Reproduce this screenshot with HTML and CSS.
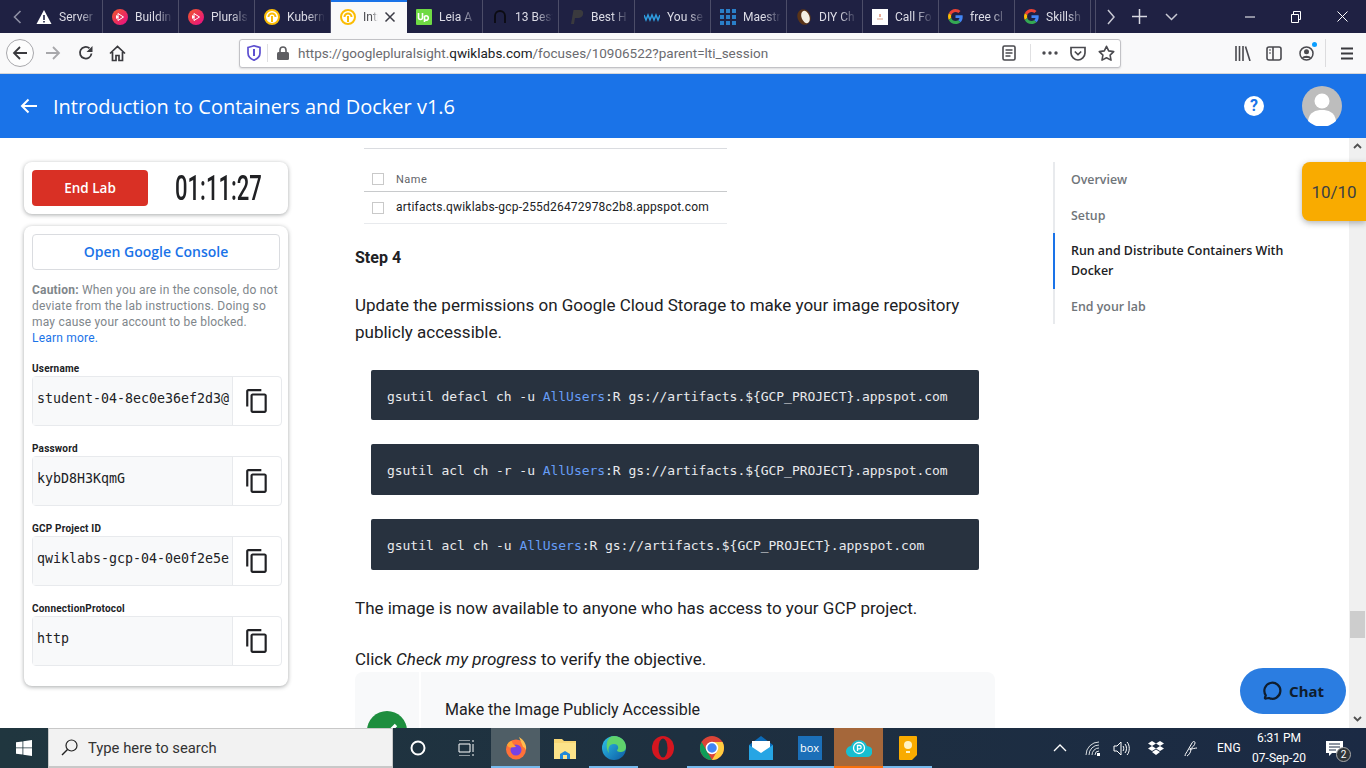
FILE: index.html
```html
<!DOCTYPE html>
<html lang="en">
<head>
    <meta charset="UTF-8">
    <title>Introduction to Containers and Docker v1.6</title>
    <link rel="stylesheet" href="styles.css">
</head>
<body>
    <svg class="defs" width="0" height="0">
        <symbol id="copy" viewBox="0 0 24 24"><path d="M16 1H4c-1.1 0-2 .9-2 2v14h2V3h12V1zm3 4H8c-1.1 0-2 .9-2 2v14c0 1.1.9 2 2 2h11c1.1 0 2-.9 2-2V7c0-1.1-.9-2-2-2zm0 16H8V7h11v14z" fill="#202124"/></symbol>
        <symbol id="pluralsight" viewBox="0 0 16 16"><defs><linearGradient id="psg" x1="0" y1="0" x2="1" y2="1"><stop offset="0" stop-color="#f05a28"/><stop offset="1" stop-color="#e80a89"/></linearGradient></defs><circle cx="8" cy="8" r="8" fill="url(#psg)"/><path d="M6 4.500v7L11.500 8z" fill="none" stroke="#fff"/><path d="M4 6v4l3-2z" fill="#fff"/></symbol>
        <symbol id="qwik" viewBox="0 0 16 16"><circle cx="8" cy="8" r="7" fill="#fff" stroke="#fbbc04" stroke-width="2"/><path d="M4.500 8a3.500 3.500 0 0 1 7 0" fill="none" stroke="#fbbc04" stroke-width="2"/><path d="M8 7v6" stroke="#fbbc04" stroke-width="2"/></symbol>
        <symbol id="google" viewBox="0 0 48 48"><path fill="#ea4335" d="M24 9.500c3.500 0 6.700 1.200 9.200 3.600l6.900-6.900C35.900 2.400 30.500 0 24 0 14.600 0 6.500 5.400 2.600 13.200l8 6.200C12.500 13.700 17.800 9.500 24 9.500z"/><path fill="#4285f4" d="M47 24.500c0-1.600-.1-3.100-.4-4.500H24v9h12.900c-.6 3-2.200 5.500-4.700 7.200l7.700 6c4.500-4.200 7.100-10.300 7.100-17.700z"/><path fill="#fbbc05" d="M10.600 28.600A14.500 14.500 0 0 1 9.800 24c0-1.600.3-3.200.8-4.600l-8-6.200A24 24 0 0 0 0 24c0 3.900.9 7.500 2.600 10.800l8-6.200z"/><path fill="#34a853" d="M24 48c6.500 0 11.900-2.100 15.900-5.800l-7.700-6c-2.200 1.500-4.900 2.300-8.200 2.300-6.200 0-11.500-4.200-13.400-9.900l-8 6.200C6.500 42.600 14.600 48 24 48z"/></symbol>
    </svg>

    <!-- browser tabs -->
    <div class="tabbar">
        <svg class="tab-scroll" width="12" height="16" viewBox="0 0 12 16"><path d="M9 2 3 8l6 6" fill="none" stroke="#8d8fa3" stroke-width="1.600"/></svg>
        <div class="tab">
            <svg class="favicon" viewBox="0 0 16 16"><path d="M8 1 15.500 15H.5z" fill="#fff"/><path d="M8 6v5M8 12v1.500" stroke="#1f2143" stroke-width="1.600"/></svg>
            <span class="tab-label">Server</span>
        </div>
        <div class="tab"><svg class="favicon"><use href="#pluralsight"/></svg><span class="tab-label">Buildin</span></div>
        <div class="tab"><svg class="favicon"><use href="#pluralsight"/></svg><span class="tab-label">Plurals</span></div>
        <div class="tab"><svg class="favicon"><use href="#qwik"/></svg><span class="tab-label">Kubern</span></div>
        <div class="tab tab-active">
            <svg class="favicon"><use href="#qwik"/></svg>
            <span class="tab-label tab-label-short">Intr</span>
            <svg class="tab-close" width="12" height="12" viewBox="0 0 12 12"><path d="m1.500 1.500 9 9m0-9-9 9" stroke="#3b3b45" stroke-width="1.500"/></svg>
        </div>
        <div class="tab">
            <svg class="favicon" viewBox="0 0 16 16"><rect width="16" height="16" rx="1" fill="#6fda44"/><path d="M2.500 4v4.500a2 2 0 0 0 4 0V4m2 9V7.500a2.200 2.200 0 1 1 0 3" fill="none" stroke="#fff" stroke-width="1.600"/></svg>
            <span class="tab-label">Leia A</span>
        </div>
        <div class="tab">
            <svg class="favicon" viewBox="0 0 16 16"><path d="M3 14V7a5 5 0 0 1 10 0v7" fill="none" stroke="#0b0b12" stroke-width="1.800"/></svg>
            <span class="tab-label">13 Best</span>
        </div>
        <div class="tab">
            <svg class="favicon" viewBox="0 0 16 16"><path d="M3 15 5.500 1H12c3 0 3.500 2.500 3 4.500S12.500 9 10.500 9H7L6 15z" fill="#3a3a3e"/></svg>
            <span class="tab-label">Best H</span>
        </div>
        <div class="tab">
            <svg class="favicon" viewBox="0 0 16 16"><path d="m0 6 2 5 2-5 2 5 2-5 2 5 2-5 2 5 2-5" fill="none" stroke="#2f9de0" stroke-width="1.500"/></svg>
            <span class="tab-label">You se</span>
        </div>
        <div class="tab">
            <svg class="favicon" viewBox="0 0 16 16"><path d="M0 0h4v4H0zm6 0h4v4H6zm6 0h4v4h-4zM0 6h4v4H0zm6 0h4v4H6zm6 0h4v4h-4zM0 12h4v4H0zm6 0h4v4H6zm6 0h4v4h-4z" fill="#2a7fc9"/></svg>
            <span class="tab-label">Maestr</span>
        </div>
        <div class="tab">
            <svg class="favicon" viewBox="0 0 16 16"><ellipse cx="8" cy="8" rx="6.500" ry="8" fill="#5a3418" transform="rotate(-20 8 8)"/><ellipse cx="9.500" cy="8" rx="4" ry="6.500" fill="#f3eee2" transform="rotate(-20 9.500 8)"/></svg>
            <span class="tab-label">DIY Ch</span>
        </div>
        <div class="tab">
            <svg class="favicon" viewBox="0 0 16 16"><rect width="16" height="16" fill="#fff"/><path d="M5 10h6" stroke="#d9a08a"/><path d="M8 5v3" stroke="#d2582e"/></svg>
            <span class="tab-label">Call Fo</span>
        </div>
        <div class="tab"><svg class="favicon favicon-google"><use href="#google"/></svg><span class="tab-label">free cl</span></div>
        <div class="tab"><svg class="favicon favicon-google"><use href="#google"/></svg><span class="tab-label">Skillsh</span></div>
        <div class="tabbar-actions">
            <svg width="12" height="16" viewBox="0 0 12 16"><path d="m3 1 6 7-6 7" fill="none" stroke="#c8c9d4" stroke-width="1.500"/></svg>
            <svg class="tab-plus" width="15" height="15" viewBox="0 0 15 15"><path d="M7.500 0v15M0 7.500h15" stroke="#d8d9e2" stroke-width="1.500"/></svg>
            <svg class="tab-down" width="13" height="8" viewBox="0 0 13 8"><path d="m1 1 5.500 5.500L12 1" fill="none" stroke="#c8c9d4" stroke-width="1.500"/></svg>
        </div>
        <div class="window-btns">
            <svg width="10" height="10" viewBox="0 0 10 10"><path d="M0 5h10" stroke="#fff"/></svg>
            <svg width="10" height="12" viewBox="0 0 10 12"><path d="M.5 3.500h7v8h-7zM2.500 3.500V.5h7v8h-2" fill="none" stroke="#fff"/></svg>
            <svg width="11" height="11" viewBox="0 0 11 11"><path d="m.5.500 10 10m0-10-10 10" stroke="#fff"/></svg>
        </div>
    </div>

    <!-- firefox toolbar -->
    <div class="toolbar">
        <div class="nav-back">
            <svg width="16" height="16" viewBox="0 0 16 16"><path d="M15 8H2m6-6L2 8l6 6" fill="none" stroke="#3a3a3e" stroke-width="1.800"/></svg>
        </div>
        <svg class="nav-forward" width="16" height="16" viewBox="0 0 16 16"><path d="M1 8h13M8 2l6 6-6 6" fill="none" stroke="#a8a8ab" stroke-width="1.800"/></svg>
        <svg class="nav-reload" width="16" height="16" viewBox="0 0 16 16"><path d="M13.500 8.500A5.800 5.800 0 1 1 11.500 3.300" fill="none" stroke="#3a3a3e" stroke-width="1.800"/><path d="M14.500 1v6h-6z" fill="#3a3a3e"/></svg>
        <svg class="nav-home" width="17" height="17" viewBox="0 0 17 17"><path d="M1 8.500 8.500 1.500 16 8.500M3.500 7v8.500h3.500V10.500h3v5h3.500V7" fill="none" stroke="#3a3a3e" stroke-width="1.700"/></svg>
        <div class="urlbar">
            <svg class="url-shield" width="14" height="16" viewBox="0 0 14 16"><path d="M1 2.500 7 .8l6 1.700v5.500c0 3.500-3 6-6 7.200-3-1.200-6-3.700-6-7.200z" fill="none" stroke="#5d4fd0" stroke-width="1.700"/><path d="M7 4v7" stroke="#5d4fd0" stroke-width="2"/></svg>
            <span class="url-sep"></span>
            <svg class="url-lock" width="12" height="14" viewBox="0 0 12 14"><path d="M3 6V4a3 3 0 0 1 6 0v2" fill="none" stroke="#5e5e62" stroke-width="1.600"/><rect y="6" width="12" height="8" rx="1.500" fill="#5e5e62"/></svg>
            <span class="url-text">https://googlepluralsight.<b>qwiklabs.com</b>/focuses/10906522?parent=lti_session</span>
            <svg class="url-reader" width="14" height="16" viewBox="0 0 14 16"><rect x="1" y="1" width="12" height="14" rx="1.500" fill="none" stroke="#4a4a4f" stroke-width="1.600"/><path d="M3.500 5h7M3.500 8h7M3.500 11h5" stroke="#4a4a4f" stroke-width="1.300"/></svg>
            <span class="url-sep url-sep-right"></span>
            <svg class="url-dots" width="16" height="4" viewBox="0 0 16 4"><circle cx="2" cy="2" r="1.700" fill="#4a4a4f"/><circle cx="8" cy="2" r="1.700" fill="#4a4a4f"/><circle cx="14" cy="2" r="1.700" fill="#4a4a4f"/></svg>
            <svg class="url-pocket" width="16" height="15" viewBox="0 0 16 15"><path d="M1 1.500h14v5.500c0 3.500-3.500 7-7 7s-7-3.500-7-7z" fill="none" stroke="#4a4a4f" stroke-width="1.700"/><path d="m4.800 5.500 3.200 3 3.200-3" fill="none" stroke="#4a4a4f" stroke-width="1.700"/></svg>
            <svg class="url-star" width="17" height="16" viewBox="0 0 17 16"><path d="m8.500 1.300 2.200 4.600 5 .7-3.600 3.500.9 5-4.500-2.400L4 15.100l.9-5L1.300 6.600l5-.7z" fill="none" stroke="#4a4a4f" stroke-width="1.600" stroke-linejoin="round"/></svg>
        </div>
        <svg class="tool-library" width="16" height="15" viewBox="0 0 16 15"><path d="M1 0v15M4.500 0v15M8 0v15M10.500.5l4.500 14.500" fill="none" stroke="#4a4a4f" stroke-width="1.600"/></svg>
        <svg class="tool-sidebar" width="16" height="15" viewBox="0 0 16 15"><rect x="1" y="1" width="14" height="13" rx="2" fill="none" stroke="#4a4a4f" stroke-width="1.600"/><path d="M7 1v13" stroke="#4a4a4f" stroke-width="1.600"/><path d="M3 4h2M3 7h2" stroke="#4a4a4f"/></svg>
        <div class="tool-account">
            <svg width="15" height="15" viewBox="0 0 15 15"><circle cx="7.500" cy="7.500" r="6.500" fill="none" stroke="#4a4a4f" stroke-width="1.500"/><circle cx="7.500" cy="5.800" r="2.500" fill="#4a4a4f"/><path d="M3 12c1-3 8-3 9 0" fill="#4a4a4f"/></svg>
            <span class="account-dot"></span>
        </div>
        <span class="tool-sep"></span>
        <svg class="tool-menu" width="12" height="13" viewBox="0 0 12 13"><path d="M0 1.500h12M0 6.500h12M0 11.500h12" stroke="#3a3a3e" stroke-width="1.800"/></svg>
    </div>

    <header class="lab-header">
        <svg class="header-back" width="18" height="16" viewBox="0 0 18 16"><path d="M17 8H2m6.500-6.500L2 8l6.500 6.500" fill="none" stroke="#fff" stroke-width="2"/></svg>
        <h1 class="lab-title">Introduction to Containers and Docker v1.6</h1>
        <span class="help-icon">?</span>
        <div class="avatar">
            <svg width="40" height="40" viewBox="0 0 40 40"><circle cx="20" cy="20" r="20" fill="#bdbdbd"/><circle cx="20" cy="15" r="7.500" fill="#fff"/><path d="M6 35c1-9 8-11 14-11s13 2 14 11a20 20 0 0 1-28 0z" fill="#fff"/></svg>
        </div>
    </header>

    <main class="page">
        <aside class="sidebar">
            <div class="card timer-card">
                <button class="end-btn">End Lab</button>
                <span class="timer">01:11:27</span>
            </div>
            <div class="card creds-card">
                <button class="console-btn">Open Google Console</button>
                <p class="caution"><b>Caution:</b> When you are in the console, do not deviate from the lab instructions. Doing so may cause your account to be blocked. <a href="#">Learn more.</a></p>
                <label class="field-label">Username</label>
                <div class="field">
                    <div class="field-value">student-04-8ec0e36ef2d3@</div>
                    <div class="field-copy"><svg width="26" height="26"><use href="#copy"/></svg></div>
                </div>
                <label class="field-label">Password</label>
                <div class="field">
                    <div class="field-value">kybD8H3KqmG</div>
                    <div class="field-copy"><svg width="26" height="26"><use href="#copy"/></svg></div>
                </div>
                <label class="field-label">GCP Project ID</label>
                <div class="field">
                    <div class="field-value">qwiklabs-gcp-04-0e0f2e5e</div>
                    <div class="field-copy"><svg width="26" height="26"><use href="#copy"/></svg></div>
                </div>
                <label class="field-label">ConnectionProtocol</label>
                <div class="field">
                    <div class="field-value">http</div>
                    <div class="field-copy"><svg width="26" height="26"><use href="#copy"/></svg></div>
                </div>
            </div>
        </aside>

        <article class="content">
            <div class="bucket-table">
                <div class="bucket-row bucket-head"><span class="box"></span>Name</div>
                <div class="bucket-row"><span class="box"></span>artifacts.qwiklabs-gcp-255d26472978c2b8.appspot.com</div>
            </div>
            <p class="step">Step 4</p>
            <p class="para">Update the permissions on Google Cloud Storage to make your image repository publicly accessible.</p>
            <pre class="code">gsutil defacl ch -u <span class="kw">AllUsers</span>:R gs://artifacts.${GCP_PROJECT}.appspot.com</pre>
            <pre class="code">gsutil acl ch -r -u <span class="kw">AllUsers</span>:R gs://artifacts.${GCP_PROJECT}.appspot.com</pre>
            <pre class="code">gsutil acl ch -u <span class="kw">AllUsers</span>:R gs://artifacts.${GCP_PROJECT}.appspot.com</pre>
            <p class="para para-after">The image is now available to anyone who has access to your GCP project.</p>
            <p class="para para-click">Click <em>Check my progress</em> to verify the objective.</p>
            <div class="progress-card">
                <div class="progress-side">
                    <svg width="40" height="40" viewBox="0 0 40 40"><circle cx="20" cy="20" r="20" fill="#1e8e3e"/><path d="m11 20 6 6 12-12" fill="none" stroke="#fff" stroke-width="3.500"/></svg>
                </div>
                <div class="progress-title">Make the Image Publicly Accessible</div>
            </div>
        </article>

        <nav class="outline">
            <a class="outline-item" href="#">Overview</a>
            <a class="outline-item" href="#">Setup</a>
            <a class="outline-item outline-active" href="#">Run and Distribute Containers With Docker</a>
            <a class="outline-item" href="#">End your lab</a>
        </nav>

        <div class="scrollbar">
            <svg width="9" height="6" viewBox="0 0 9 6"><path d="m1 5 3.500-3.500L8 5" fill="none" stroke="#505050" stroke-width="1.800"/></svg>
            <div class="scroll-thumb"></div>
            <svg width="9" height="6" viewBox="0 0 9 6"><path d="m1 1 3.500 3.500L8 1" fill="none" stroke="#505050" stroke-width="1.800"/></svg>
        </div>

        <div class="score">10/10</div>
        <div class="chat-btn">
            <svg width="20" height="20" viewBox="0 0 20 20"><path d="M4 17.500c-.8.300-1.300 0-1 -1l.8-2.200A8 8 0 1 1 7 17z" fill="none" stroke="#0f1d2e" stroke-width="2.200" stroke-linejoin="round"/></svg>
            <span>Chat</span>
        </div>
    </main>

    <!-- windows taskbar -->
    <footer class="taskbar">
        <div class="start">
            <svg width="16" height="16" viewBox="0 0 16 16"><path d="M0 2.300 6.500 1.400v6.100H0zM7.300 1.300 16 0v7.500H7.300zM0 8.300h6.500v6.200L0 13.700zM7.300 8.300H16V16l-8.700-1.300z" fill="#fff"/></svg>
        </div>
        <div class="search">
            <svg width="17" height="17" viewBox="0 0 17 17"><circle cx="10.500" cy="6.500" r="5.500" fill="none" stroke="#222" stroke-width="1.200"/><path d="M6.500 10.500 1 16" stroke="#222" stroke-width="1.400"/></svg>
            <span>Type here to search</span>
        </div>
        <div class="task-item">
            <svg width="16" height="16" viewBox="0 0 16 16"><circle cx="8" cy="8" r="6.500" fill="none" stroke="#fff" stroke-width="2"/></svg>
        </div>
        <div class="task-item">
            <svg width="17" height="16" viewBox="0 0 17 16"><path d="M1 0h11M1 16h11M1 4h11v8H1zM15 0v2M15 4v8M15 14v2" fill="none" stroke="#fff"/></svg>
        </div>
        <div class="task-item task-running task-active">
            <svg width="24" height="24" viewBox="0 0 24 24"><circle cx="12" cy="13.500" r="10" fill="#ff7139"/><path d="M15 1c5 3 8 8 7 13-1-2-2-3-3-3z" fill="#ffbd4f"/><circle cx="12" cy="14" r="5.500" fill="#7542e5"/><path d="M3 9c2 4 5 2 9 2-1-2-4-3-4-6-3 0-4 2-5 4z" fill="#ffa436"/></svg>
        </div>
        <div class="task-item">
            <svg width="22" height="22" viewBox="0 0 22 22"><path d="M0 2h8l2 2h12v18H0z" fill="#f8d775"/><path d="M0 6h22v16H0z" fill="#fce38a"/><path d="M6 22v-5l5-3 5 3v5z" fill="#1f88d9"/><path d="M9 22v-4h4v4z" fill="#fce38a"/></svg>
        </div>
        <div class="task-item task-running">
            <svg width="24" height="24" viewBox="0 0 24 24"><defs><linearGradient id="edgeg" x1="0" y1="0" x2="1" y2="1"><stop offset="0" stop-color="#2fc4e8"/><stop offset="1" stop-color="#0c59a4"/></linearGradient></defs><circle cx="12" cy="12" r="12" fill="url(#edgeg)"/><path d="M12 0c7 0 12 5 12 11 0 4-3 5-6 5-2 0-3-1-3-2 2-1 2-6-3-6-6 0-6 6-5 9C3 12 4 0 12 0z" fill="#5fd36c"/></svg>
        </div>
        <div class="task-item">
            <svg width="22" height="24" viewBox="0 0 22 24"><ellipse cx="11" cy="12" rx="11" ry="12" fill="#d5161f"/><ellipse cx="11" cy="12" rx="4.500" ry="9.500" fill="#1f333f"/></svg>
        </div>
        <div class="task-item task-running">
            <svg width="24" height="24" viewBox="0 0 24 24"><circle cx="12" cy="12" r="12" fill="#db4437"/><path d="M12 24a12 12 0 0 1-10.400-18l6 10.500z" fill="#0f9d58"/><path d="M24 12a12 12 0 0 1-12 12l6-10.500L12 6h10.500c1 1.800 1.500 3.800 1.500 6z" fill="#ffcd40"/><circle cx="12" cy="12" r="5.500" fill="#4285f4" stroke="#fff" stroke-width="1.500"/></svg>
        </div>
        <div class="task-item task-running">
            <svg width="24" height="24" viewBox="0 0 24 24"><path d="M0 9 12 0l12 9v15H0z" fill="#0c6bb8"/><path d="M3 5h18v12H3z" fill="#fff"/><path d="M0 9l12 8 12-8v15H0z" fill="#26a5e4"/></svg>
        </div>
        <div class="task-item task-running">
            <span class="box-logo">box</span>
        </div>
        <div class="task-item task-running task-pcloud">
            <svg width="26" height="20" viewBox="0 0 26 20"><path d="M6 19a5.500 5.500 0 0 1-1-11 8.500 8.500 0 0 1 16 0 5.500 5.500 0 0 1 0 11z" fill="#17bed0"/><circle cx="13" cy="10" r="5.500" fill="none" stroke="#fff" stroke-width="1.300"/><path d="M11.500 13V7.500h2a1.700 1.700 0 0 1 0 3.400h-2" fill="none" stroke="#fff" stroke-width="1.300"/></svg>
        </div>
        <div class="task-item task-running">
            <svg width="18" height="24" viewBox="0 0 18 24"><path d="M1 0h16a1 1 0 0 1 1 1v18l-5 5H1a1 1 0 0 1-1-1V1a1 1 0 0 1 1-1z" fill="#f9ab00"/><circle cx="9" cy="9" r="4" fill="#fff3c4"/><path d="M7 15h4v2H7z" fill="#fff3c4"/></svg>
        </div>
        <div class="tray">
            <svg class="tray-caret" width="14" height="8" viewBox="0 0 14 8"><path d="m1 7 6-6 6 6" fill="none" stroke="#fff" stroke-width="1.300"/></svg>
            <svg class="tray-wifi" width="15" height="15" viewBox="0 0 15 15"><path d="M1 14A13 13 0 0 1 14 1M4 14A10 10 0 0 1 14 4M7 14a7 7 0 0 1 7-7M10 14a4 4 0 0 1 4-4" fill="none" stroke="#d8dde0"/><path d="M12 12h3v3h-3z" fill="#fff"/></svg>
            <svg class="tray-vol" width="17" height="15" viewBox="0 0 17 15"><path d="M1 5h3l4-4v13l-4-4H1zM10 5c1 1 1 4 0 5M12 3c2 2 2 7 0 9M14 1c3 3 3 10 0 13" fill="none" stroke="#fff"/></svg>
            <svg class="tray-drop" width="16" height="15" viewBox="0 0 16 15"><path d="M4 0 8 2.500 4 5 0 2.500zM12 0l4 2.500L12 5 8 2.500zM4 5l4 2.500L4 10 0 7.500zM12 5l4 2.500-4 2.500-4-2.500zM4 11l4-2.500 4 2.500-4 3z" fill="#fff"/></svg>
            <svg class="tray-pen" width="15" height="17" viewBox="0 0 15 17"><path d="M1 16c0-2 2-4 3-6l4-7c1-2 3-2 3 0s-3 5-5 6 5-1 7-1M3 16c2-1 4-4 4-7" fill="none" stroke="#fff"/></svg>
            <span class="tray-lang">ENG</span>
            <div class="clock"><span>6:31 PM</span><span>07-Sep-20</span></div>
            <div class="notify">
                <svg width="17" height="15" viewBox="0 0 17 15"><path d="M0 0h17v12H6l-3 3v-3H0z" fill="#fff"/><path d="M3 3h11M3 6h11M3 9h7" stroke="#1b2a44"/></svg>
                <span class="notify-count">2</span>
            </div>
        </div>
    </footer>
</body>
</html>
```
FILE: styles.css
```css
html, body {
    margin: 0;
    height: 100%;
    overflow: hidden;
}
body {
    display: flex;
    flex-direction: column;
    font-family: Roboto, "Liberation Sans", sans-serif;
    color: #202124;
    background: #fff;
}
.defs {
    position: absolute;
}
svg {
    flex: none;
    display: block;
}

/* tabs */
.tabbar {
    height: 33px;
    background: #1f2143;
    display: flex;
    align-items: stretch;
    flex: none;
}
.tab-scroll {
    width: 27px;
    align-self: center;
    padding-left: 8px;
    box-sizing: border-box;
}
.tab {
    width: 76px;
    flex: none;
    box-sizing: border-box;
    border-right: 1px solid #4c4d68;
    padding-left: 9px;
    display: flex;
    align-items: center;
    gap: 7px;
    overflow: hidden;
    font-size: 12px;
    color: #dcdce6;
}
.favicon {
    width: 16px;
    height: 16px;
}
.favicon-google {
    width: 15px;
    height: 15px;
}
.tab-label {
    white-space: nowrap;
    width: 38px;
    flex: none;
    -webkit-mask-image: linear-gradient(to right, #000 55%, transparent);
    mask-image: linear-gradient(to right, #000 55%, transparent);
}
.tab-active {
    background: #f9f9fa;
    color: #4a4a4f;
    border-right: none;
    border-top: 2px solid #1a73e8;
    padding-bottom: 2px;
}
.tab-label-short {
    width: 15px;
}
.tab-close {
    margin-left: -1px;
}
.tabbar-actions {
    display: flex;
    align-items: center;
    padding-left: 9px;
    border-left: 1px solid #4c4d68;
    margin-left: 4px;
}
.tab-plus {
    margin-left: 15px;
}
.tab-down {
    margin-left: 18px;
}
.window-btns {
    margin-left: auto;
    display: flex;
    align-items: center;
    gap: 36px;
    padding-right: 18px;
}

/* toolbar */
.toolbar {
    height: 41px;
    background: #f9f9fa;
    border-bottom: 1px solid #d6d6d8;
    box-sizing: border-box;
    display: flex;
    align-items: center;
    flex: none;
}
.nav-back {
    width: 26px;
    height: 26px;
    margin-left: 6px;
    border: 1px solid #a8a8ac;
    border-radius: 50%;
    background: #fdfdfd;
    display: flex;
    align-items: center;
    justify-content: center;
}
.nav-forward {
    margin-left: 11px;
}
.nav-reload {
    margin-left: 17px;
}
.nav-home {
    margin-left: 15px;
}
.urlbar {
    width: 882px;
    height: 29px;
    margin-left: 113px;
    box-sizing: border-box;
    background: #fff;
    border: 1px solid #c2c2c6;
    border-radius: 3px;
    display: flex;
    align-items: center;
    padding-left: 7px;
    box-shadow: 0 1px 2px rgba(0, 0, 0, 0.12);
}
.url-sep {
    width: 1px;
    height: 18px;
    background: #e0e0e2;
    margin-left: 6px;
}
.url-lock {
    margin-left: 9px;
}
.url-text {
    margin-left: 9px;
    font-size: 13.500px;
    color: #6b6b70;
    white-space: nowrap;
    width: 704px;
}
.url-text b {
    font-weight: 400;
    color: #202124;
}
.url-sep-right {
    margin-left: 14px;
}
.url-dots {
    margin-left: 11px;
}
.url-pocket {
    margin-left: 12px;
}
.url-star {
    margin-left: 12px;
}
.tool-library {
    margin-left: 114px;
}
.tool-sidebar {
    margin-left: 15px;
}
.tool-account {
    position: relative;
    margin-left: 17px;
}
.account-dot {
    position: absolute;
    top: -4px;
    right: -3px;
    width: 5px;
    height: 5px;
    border-radius: 50%;
    background: #0a9dff;
}
.tool-sep {
    width: 1px;
    height: 28px;
    background: #dcdcde;
    margin-left: 11px;
}
.tool-menu {
    margin-left: 15px;
}

/* lab header */
.lab-header {
    height: 64px;
    background: #1a73e8;
    display: flex;
    align-items: center;
    flex: none;
}
.header-back {
    margin-left: 20px;
}
.lab-title {
    margin: 0 0 0 15px;
    font-family: "Open Sans", sans-serif;
    font-size: 20px;
    font-weight: 400;
    color: #fff;
    white-space: nowrap;
}
.help-icon {
    margin-left: auto;
    width: 20px;
    height: 20px;
    border-radius: 50%;
    background: #fff;
    color: #1a73e8;
    font-size: 16px;
    font-weight: 700;
    line-height: 20px;
    text-align: center;
}
.avatar {
    margin: 0 24px 0 38px;
}

/* page */
.page {
    flex: 1;
    min-height: 0;
    position: relative;
    display: flex;
    overflow: hidden;
}
.sidebar {
    width: 355px;
    flex: none;
    box-sizing: border-box;
    padding: 24px 0 0 24px;
}
.card {
    width: 264px;
    box-sizing: border-box;
    background: #fff;
    border-radius: 8px;
    box-shadow: 0 1px 4px rgba(60, 64, 67, 0.45);
    padding: 8px;
}
.timer-card {
    height: 52px;
    display: flex;
    align-items: center;
}
.end-btn {
    width: 116px;
    height: 36px;
    flex: none;
    border: none;
    border-radius: 4px;
    background: #d93025;
    color: #fff;
    font-family: "Open Sans", sans-serif;
    font-size: 13.500px;
    font-weight: 600;
}
.timer {
    margin-left: 27px;
    width: 85px;
    font-family: Roboto, sans-serif;
    font-size: 35px;
    font-weight: 500;
    color: #202124;
    white-space: nowrap;
    transform: scaleX(0.63);
    transform-origin: left center;
}
.creds-card {
    margin-top: 12px;
    height: 460px;
}
.console-btn {
    width: 248px;
    height: 36px;
    padding: 0 0 2px;
    background: #fff;
    border: 1px solid #dadce0;
    border-radius: 4px;
    color: #1a73e8;
    font-family: "Open Sans", sans-serif;
    font-size: 14px;
    font-weight: 600;
}
.caution {
    margin: 12px 0 17px;
    font-size: 12px;
    letter-spacing: 0.2px;
    line-height: 16px;
    color: #80868b;
}
.caution a {
    display: block;
    color: #1a73e8;
    text-decoration: none;
}
.field-label {
    display: block;
    height: 12px;
    margin: 17px 0 1px;
    font-size: 10px;
    letter-spacing: 0.2px;
    line-height: 12px;
    font-weight: 700;
    color: #202124;
}
.caution + .field-label {
    margin-top: 0;
}
.field {
    width: 250px;
    height: 50px;
    box-sizing: border-box;
    border: 1px solid #e8eaed;
    border-radius: 4px;
    display: flex;
}
.field-value {
    width: 200px;
    box-sizing: border-box;
    padding: 13px 0 0 4px;
    background: #f8f9fa;
    border-right: 1px solid #e8eaed;
    font-family: "DejaVu Sans Mono", monospace;
    font-size: 13.300px;
    line-height: 17px;
    white-space: nowrap;
    overflow: hidden;
    color: #202124;
}
.field-copy {
    flex: 1;
    display: flex;
    align-items: center;
    justify-content: center;
}

/* article */
.content {
    width: 640px;
    flex: none;
    padding-top: 10px;
}
.bucket-table {
    width: 363px;
    margin-left: 9px;
    border-top: 1px solid #dadce0;
    padding-top: 18px;
    font-size: 12px;
    letter-spacing: 0.2px;
}
.bucket-row {
    display: flex;
    align-items: center;
    height: 31px;
    box-sizing: content-box;
    border-bottom: 1px solid #e8eaed;
    color: #202124;
    line-height: 29px;
}
.bucket-head {
    height: 24px;
    font-size: 11px;
    letter-spacing: 0.5px;
    color: #5f6368;
    border-bottom-color: #c8cacc;
}
.box {
    width: 10px;
    height: 10px;
    border: 1px solid #c9c9c9;
    margin: 0 12px 0 8px;
}
.step {
    margin: 24px 0 0;
    font-size: 16px;
    font-weight: 700;
    line-height: 20px;
}
.para {
    margin: 24px 0 0;
    font-size: 17px;
    line-height: 27px;
}
.code {
    margin: 24px 0 0 16px;
    width: 608px;
    height: 51px;
    box-sizing: border-box;
    padding-left: 16px;
    background: #28323f;
    border-radius: 2px;
    color: #e8eaed;
    font-family: "DejaVu Sans Mono", monospace;
    font-size: 13px;
    letter-spacing: -0.04px;
    line-height: 53px;
}
.para + .code {
    height: 50px;
}
.kw {
    color: #669df6;
}
.para-after {
    margin-top: 25px;
}
.para-click {
    margin-top: 24px;
}
.progress-card {
    height: 120px;
    margin-top: -1px;
    background: #f8f9fa;
    border-radius: 8px;
    display: flex;
}
.progress-side {
    width: 66px;
    border-right: 2px solid #fff;
    padding: 39px 0 0 12px;
    box-sizing: border-box;
}
.progress-title {
    margin-left: 24px;
    padding-top: 28px;
    font-size: 16px;
}

/* right outline */
.outline {
    margin: 24px 0 0 58px;
    width: 296px;
    height: 162px;
    box-sizing: border-box;
    border-left: 2px solid #e8eaed;
    display: flex;
    flex-direction: column;
}
.outline-item {
    margin-left: -2px;
    border-left: 2px solid transparent;
    padding: 8px 50px 7.500px 16px;
    font-family: "Open Sans", sans-serif;
    font-size: 12.400px;
    font-weight: 600;
    line-height: 20px;
    color: #70757a;
    text-decoration: none;
}
.outline-active {
    border-left-color: #1a73e8;
    color: #202124;
}
.scrollbar {
    width: 17px;
    margin-left: auto;
    flex: none;
    background: #f0f0f0;
    display: flex;
    flex-direction: column;
    align-items: center;
    padding: 5px 0 6px;
    box-sizing: border-box;
    position: relative;
}
.scroll-thumb {
    position: absolute;
    top: 473px;
    width: 15px;
    height: 27px;
    background: #cdcdcd;
}
.scrollbar svg:last-child {
    margin-top: auto;
}
.score {
    position: absolute;
    top: 24px;
    right: 0;
    width: 64px;
    height: 59px;
    background: #f9ab00;
    border-radius: 8px 0 0 8px;
    box-shadow: 0 2px 6px rgba(60, 64, 67, 0.4);
    color: #3c4043;
    font-size: 17px;
    line-height: 60px;
    text-align: center;
}
.chat-btn {
    position: absolute;
    left: 1240px;
    top: 530px;
    width: 106px;
    height: 46px;
    border-radius: 23px;
    background: #2b7de1;
    display: flex;
    align-items: center;
    justify-content: center;
    gap: 7px;
    font-family: "Noto Sans", sans-serif;
    font-size: 15px;
    font-weight: 700;
    color: #0f1d2e;
}

/* taskbar */
.taskbar {
    height: 40px;
    flex: none;
    background: linear-gradient(to right, #20363f, #1e3040 50%, #1b2a44);
    display: flex;
    color: #fff;
}
.start {
    width: 48px;
    flex: none;
    display: flex;
    align-items: center;
    justify-content: center;
}
.search {
    width: 345px;
    flex: none;
    box-sizing: border-box;
    background: #f2f2f2;
    border: 1px solid #c8c8c8;
    border-bottom-width: 2px;
    display: flex;
    align-items: center;
    padding-left: 12px;
    gap: 10px;
    font-size: 14.800px;
    color: #333;
}
.task-item {
    width: 49px;
    flex: none;
    box-sizing: border-box;
    display: flex;
    align-items: center;
    justify-content: center;
}
.task-running {
    border-bottom: 2px solid #76b9ed;
    padding-top: 2px;
}
.task-active {
    background: #4f5e66;
}
.task-pcloud {
    background: #a5673a;
    border-bottom-color: #f7700d;
}
.box-logo {
    width: 24px;
    height: 24px;
    background: #1b6fb8;
    color: #fff;
    font-family: "Open Sans", sans-serif;
    font-size: 11px;
    line-height: 24px;
    text-align: center;
}
.tray {
    flex: 1;
    display: flex;
    align-items: center;
}
.tray-caret {
    margin-left: 121px;
}
.tray-wifi {
    margin-left: 18px;
}
.tray-vol {
    margin-left: 13px;
}
.tray-drop {
    margin-left: 18px;
}
.tray-pen {
    margin-left: 20px;
}
.tray-lang {
    margin-left: 18px;
    font-size: 12px;
    width: 24px;
}
.clock {
    margin-left: 2px;
    width: 72px;
    flex: none;
    display: flex;
    flex-direction: column;
    align-items: center;
    font-size: 12px;
    line-height: 20px;
}
.notify {
    position: relative;
    margin-left: 11px;
}
.notify-count {
    position: absolute;
    right: -8px;
    top: 6px;
    width: 15px;
    height: 15px;
    border-radius: 50%;
    background: #2f3438;
    border: 1px solid #aaa;
    box-sizing: border-box;
    font-size: 10px;
    line-height: 13px;
    text-align: center;
}
```
